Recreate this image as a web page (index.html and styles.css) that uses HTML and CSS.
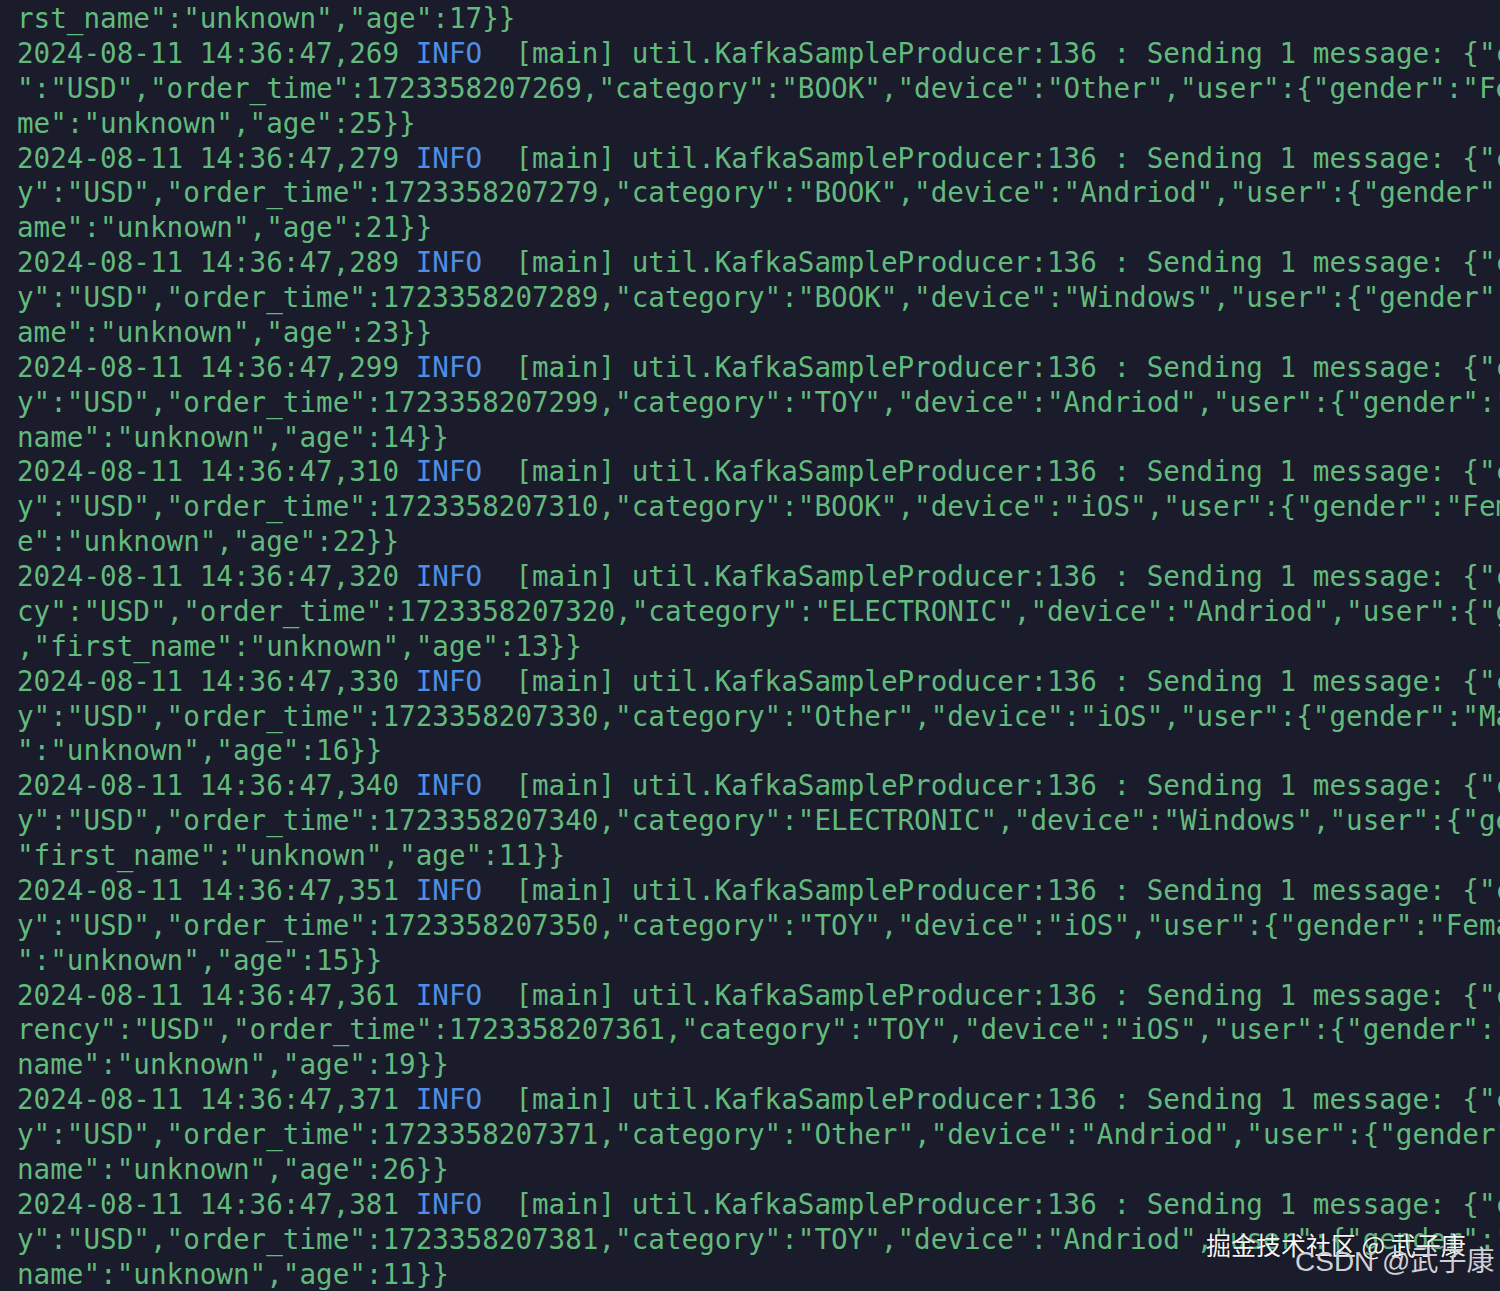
FILE: index.html
```html
<!DOCTYPE html>
<html lang="en">
<head>
<meta charset="utf-8">
<title>Kafka producer log</title>
<link rel="stylesheet" href="styles.css">
</head>
<body>
<main class="terminal">
<div class="line">rst_name":"unknown","age":17}}</div>
<div class="line">2024-08-11 14:36:47,269 <span class="lvl">INFO</span>  [main] util.KafkaSampleProducer:136 : Sending 1 message: {"currency</div>
<div class="line">":"USD","order_time":1723358207269,"category":"BOOK","device":"Other","user":{"gender":"Female","last_na</div>
<div class="line">me":"unknown","age":25}}</div>
<div class="line">2024-08-11 14:36:47,279 <span class="lvl">INFO</span>  [main] util.KafkaSampleProducer:136 : Sending 1 message: {"currency</div>
<div class="line">y":"USD","order_time":1723358207279,"category":"BOOK","device":"Andriod","user":{"gender":"Male","last_n</div>
<div class="line">ame":"unknown","age":21}}</div>
<div class="line">2024-08-11 14:36:47,289 <span class="lvl">INFO</span>  [main] util.KafkaSampleProducer:136 : Sending 1 message: {"currency</div>
<div class="line">y":"USD","order_time":1723358207289,"category":"BOOK","device":"Windows","user":{"gender":"Male","last_n</div>
<div class="line">ame":"unknown","age":23}}</div>
<div class="line">2024-08-11 14:36:47,299 <span class="lvl">INFO</span>  [main] util.KafkaSampleProducer:136 : Sending 1 message: {"currency</div>
<div class="line">y":"USD","order_time":1723358207299,"category":"TOY","device":"Andriod","user":{"gender":"Female","last_</div>
<div class="line">name":"unknown","age":14}}</div>
<div class="line">2024-08-11 14:36:47,310 <span class="lvl">INFO</span>  [main] util.KafkaSampleProducer:136 : Sending 1 message: {"currency</div>
<div class="line">y":"USD","order_time":1723358207310,"category":"BOOK","device":"iOS","user":{"gender":"Female","last_nam</div>
<div class="line">e":"unknown","age":22}}</div>
<div class="line">2024-08-11 14:36:47,320 <span class="lvl">INFO</span>  [main] util.KafkaSampleProducer:136 : Sending 1 message: {"currency</div>
<div class="line">cy":"USD","order_time":1723358207320,"category":"ELECTRONIC","device":"Andriod","user":{"gender":"Male"</div>
<div class="line">,"first_name":"unknown","age":13}}</div>
<div class="line">2024-08-11 14:36:47,330 <span class="lvl">INFO</span>  [main] util.KafkaSampleProducer:136 : Sending 1 message: {"currency</div>
<div class="line">y":"USD","order_time":1723358207330,"category":"Other","device":"iOS","user":{"gender":"Male","last_name</div>
<div class="line">":"unknown","age":16}}</div>
<div class="line">2024-08-11 14:36:47,340 <span class="lvl">INFO</span>  [main] util.KafkaSampleProducer:136 : Sending 1 message: {"currency</div>
<div class="line">y":"USD","order_time":1723358207340,"category":"ELECTRONIC","device":"Windows","user":{"gender":"Male",</div>
<div class="line">"first_name":"unknown","age":11}}</div>
<div class="line">2024-08-11 14:36:47,351 <span class="lvl">INFO</span>  [main] util.KafkaSampleProducer:136 : Sending 1 message: {"currency</div>
<div class="line">y":"USD","order_time":1723358207350,"category":"TOY","device":"iOS","user":{"gender":"Female","last_name</div>
<div class="line">":"unknown","age":15}}</div>
<div class="line">2024-08-11 14:36:47,361 <span class="lvl">INFO</span>  [main] util.KafkaSampleProducer:136 : Sending 1 message: {"currency</div>
<div class="line">rency":"USD","order_time":1723358207361,"category":"TOY","device":"iOS","user":{"gender":"Male","last_</div>
<div class="line">name":"unknown","age":19}}</div>
<div class="line">2024-08-11 14:36:47,371 <span class="lvl">INFO</span>  [main] util.KafkaSampleProducer:136 : Sending 1 message: {"currency</div>
<div class="line">y":"USD","order_time":1723358207371,"category":"Other","device":"Andriod","user":{"gender":"Male","last_</div>
<div class="line">name":"unknown","age":26}}</div>
<div class="line">2024-08-11 14:36:47,381 <span class="lvl">INFO</span>  [main] util.KafkaSampleProducer:136 : Sending 1 message: {"currency</div>
<div class="line">y":"USD","order_time":1723358207381,"category":"TOY","device":"Andriod","user":{"gender":"Male","last_</div>
<div class="line">name":"unknown","age":11}}</div>
</main>
<div class="wm wm-juejin">掘金技术社区 @ 武子康</div>
<div class="wm wm-csdn">CSDN @武子康</div>
</body>
</html>
```
FILE: styles.css
```css
html, body {
  margin: 0;
  padding: 0;
  background: #1a1b2b;
}

body {
  width: 1500px;
  height: 1291px;
  overflow: hidden;
  position: relative;
}

.terminal {
  padding: 2px 0 0 17px;
  font-family: "DejaVu Sans Mono", "Liberation Mono", monospace;
  font-size: 27.6px;
  line-height: 34.87px;
  color: #63ba7d;
}

.line {
  white-space: pre;
  overflow: hidden;
}

.lvl {
  color: #4f8ee3;
}

.wm {
  position: absolute;
  white-space: nowrap;
  font-family: "Noto Sans CJK SC", "Noto Sans", sans-serif;
}

.wm-juejin {
  left: 1206px;
  top: 1227px;
  font-size: 25px;
  line-height: 34px;
  color: #f4f4f4;
  text-shadow: 0 0 2px rgba(0, 0, 0, 0.6);
}

.wm-csdn {
  left: 1295px;
  top: 1242px;
  font-size: 28px;
  line-height: 40px;
  color: #cfcfd4;
  font-family: "Liberation Sans", "Noto Sans CJK SC", sans-serif;
}
```
